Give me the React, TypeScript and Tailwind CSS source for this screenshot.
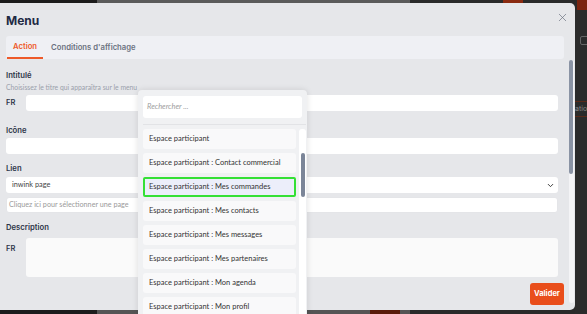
import { X, ChevronDown } from 'lucide-react'

const options = [
  'Espace participant',
  'Espace participant : Contact commercial',
  'Espace participant : Mes commandes',
  'Espace participant : Mes contacts',
  'Espace participant : Mes messages',
  'Espace participant : Mes partenaires',
  'Espace participant : Mon agenda',
  'Espace participant : Mon profil',
]

const head = { fontFamily: 'Inter, "Noto Sans", sans-serif' }
const body = { fontFamily: 'Lato, "Liberation Sans", sans-serif' }

function Backdrop() {
  return (
    <>
      {/* top strip */}
      <div className="absolute left-0 top-0 flex h-[3px] w-full">
        <div className="w-[97px] bg-[#1c1c1c]" />
        <div className="w-[313px] bg-[#5b5b5b]" />
        <div className="w-[93px] bg-[#2a2a2a]" />
        <div className="w-[20px] bg-[#8a2a10]" />
        <div className="flex-1 bg-[#2a2a2a]" />
      </div>
      {/* bottom strip */}
      <div className="absolute bottom-0 left-0 flex h-[4px] w-full">
        <div className="w-[97px] bg-[#1c1c1c]" />
        <div className="w-[273px] bg-[#555]" />
        <div className="w-[30px] bg-[#5a1a0a]" />
        <div className="w-[10px] bg-[#555]" />
        <div className="flex-1 bg-[#2a2a2a]" />
      </div>
      {/* right edge of the page behind */}
      <div className="absolute right-0 top-0 h-full w-[12px] overflow-hidden bg-[#2b2b2b]">
        <div className="ml-[2px] h-[10px] w-[12px] bg-[#7a2410]" />
        <div className="ml-[5px] mt-[26px] h-[9px] w-[10px] rounded-[2px] border border-[#666]" />
        <div className="mt-[56px] whitespace-nowrap border-y border-[#5a2a1a] py-[2px] text-[7px] leading-[10px] text-[#888]" style={head}>
          atio
        </div>
      </div>
    </>
  )
}

function Dropdown() {
  return (
    <div className="absolute left-[138px] top-[90px] h-[230px] w-[169px] rounded-[4px] bg-[#f0f1f3] pl-[5px] pr-[1px] pt-[6px] shadow-[0_0_6px_rgba(0,0,0,0.12)]" style={body}>
      <div className="mr-[4px] flex h-[22px] items-center rounded-[3px] bg-white px-[4px] text-[7.5px] italic text-[#a0a0a0]">
        Rechercher ...
      </div>
      <div className="mt-[6px] flex gap-[3px] border-t border-[#e2e3e6] pt-[4px]">
        <div className="flex w-[153px] shrink-0 flex-col gap-[4px]">
          {options.map((o) => (
            <div
              key={o}
              className={
                o === 'Espace participant : Mes commandes'
                  ? 'flex h-[20px] items-center whitespace-nowrap rounded-[2px] border-2 border-[#35e035] bg-[#eceefa] px-[4px] text-[7.5px] text-[#333]'
                  : 'flex h-[20px] items-center whitespace-nowrap rounded-[3px] bg-[#f9f9fa] px-[6px] text-[7.5px] text-[#333]'
              }
            >
              {o}
            </div>
          ))}
        </div>
        <div className="w-[7px] shrink-0 rounded-[3px] bg-white pt-[24px]">
          <div className="ml-[1.5px] h-[44px] w-[4px] rounded-full bg-[#7b8598]" />
        </div>
      </div>
    </div>
  )
}

export default function App() {
  return (
    <div className="relative h-[314px] w-[587px] overflow-hidden bg-[#2a2a2a]">
      <Backdrop />

      <div className="absolute left-0 top-[3px] h-[307px] w-[575px] rounded-r-[5px] bg-[#e6e7ea] pl-[6px]">
        <div className="flex h-[33px] items-center justify-between pr-[6px]">
          <h1 className="mt-[2px] text-[12px] font-bold text-[#1f2a44]" style={head}>Menu</h1>
          <X size={13} strokeWidth={1.3} className="mt-[-4px] text-[#6b7280]" />
        </div>

        <div className="flex h-[23px] w-[558px] items-stretch rounded-[3px] bg-[#eff0f4] text-[7.7px] font-semibold" style={head}>
          <div className="ml-[1px] flex items-center border-b-2 border-[#ee5a2a] px-[6px] text-[#ee5a2a]">Action</div>
          <div className="flex items-center px-[8px] text-[#6b7280]">Conditions d'affichage</div>
        </div>

        <div className="flex w-[552px] flex-col">
          <div className="mt-[11px] text-[7.7px] font-semibold leading-[12px] text-[#2d3548]" style={head}>Intitulé</div>
          <div className="text-[6.8px] leading-[10px] text-[#9aa0aa]" style={body}>Choisissez le titre qui apparaîtra sur le menu</div>
          <div className="mt-[3px] flex items-center">
            <span className="w-[20px] text-[7.5px] font-semibold text-[#2d3548]" style={head}>FR</span>
            <div className="h-[16px] flex-1 rounded-[3px] bg-white" />
          </div>

          <div className="mt-[14px] text-[7.7px] font-semibold leading-[12px] text-[#2d3548]" style={head}>Icône</div>
          <div className="mt-[1px] h-[16px] rounded-[3px] bg-white" />

          <div className="mt-[9px] text-[7.7px] font-semibold leading-[12px] text-[#2d3548]" style={head}>Lien</div>
          <div className="mt-[2px] flex h-[16px] items-center justify-between rounded-[3px] bg-white pl-[6px] pr-[3px] text-[7.3px] text-[#444]" style={body}>
            inwink page
            <ChevronDown size={9} strokeWidth={2.5} className="text-[#333]" />
          </div>
          <div className="mt-[4px] flex h-[16px] items-center rounded-[3px] border border-[#e4e5e8] bg-white px-[2px] text-[7.2px] text-[#9a9a9a]" style={body}>
            Cliquez ici pour sélectionner une page
          </div>

          <div className="mt-[9px] text-[7.7px] font-semibold leading-[12px] text-[#2d3548]" style={head}>Description</div>
          <div className="mt-[4px] flex">
            <span className="mt-[5px] w-[20px] text-[7.5px] font-semibold text-[#2d3548]" style={head}>FR</span>
            <div className="h-[39px] flex-1 rounded-[3px] bg-[#fafafa]" />
          </div>
        </div>

        <div className="mt-[6px] flex w-[558px] justify-end">
          <button className="h-[22px] w-[34px] rounded-[3px] bg-[#e94e1b] text-[7.5px] font-bold text-white" style={head}>Valider</button>
        </div>

        {/* modal scrollbar */}
        <div className="absolute right-[1px] top-[57px] h-[243px] w-[5px] rounded-full bg-[#f4f4f6]">
          <div className="h-[114px] w-[4px] rounded-full bg-[#8a93a4]" />
        </div>
      </div>

      <Dropdown />
    </div>
  )
}
